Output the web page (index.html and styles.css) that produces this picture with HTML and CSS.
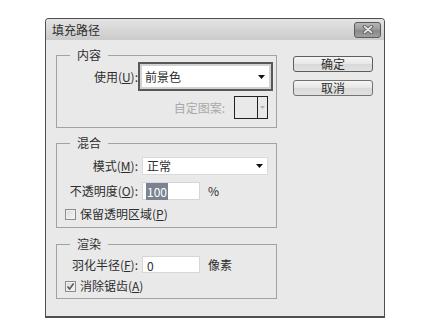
FILE: index.html
```html
<!DOCTYPE html>
<html lang="zh-CN">
<head>
  <meta charset="utf-8">
  <title>填充路径</title>
  <link rel="stylesheet" href="styles.css">
</head>
<body>

  <div class="dialog">
    <div class="titlebar">
      <span class="title">填充路径</span>
      <button class="close" type="button">
        <svg width="12" height="9" viewBox="0 0 12 9">
          <path d="M2.5 1.5 L9.5 7.5 M9.5 1.5 L2.5 7.5" stroke="#555" stroke-width="3.4" stroke-linecap="round"/>
          <path d="M2.5 1.5 L9.5 7.5 M9.5 1.5 L2.5 7.5" stroke="#e8e8e8" stroke-width="1.7" stroke-linecap="round"/>
        </svg>
      </button>
    </div>

    <div class="content">
      <div class="groups">

        <fieldset class="group group-source">
          <legend>内容</legend>
          <div class="form-grid">
            <label class="label">使用(<u>U</u>):</label>
            <div class="select select-focus">
              <span>前景色</span>
              <svg class="caret" width="7" height="4" viewBox="0 0 7 4"><path d="M0 0H7L3.5 4Z" fill="#111"/></svg>
            </div>

            <div class="pattern-row">
              <span class="muted">自定图案:</span>
              <div class="pattern-box">
                <span class="pattern-swatch"></span>
                <span class="pattern-arrow">
                  <svg width="5" height="3" viewBox="0 0 5 3"><path d="M0 0H5L2.5 3Z" fill="#b4b4b4"/></svg>
                </span>
              </div>
            </div>
          </div>
        </fieldset>

        <fieldset class="group group-blend">
          <legend>混合</legend>
          <div class="form-grid">
            <label class="label">模式(<u>M</u>):</label>
            <div class="select">
              <span>正常</span>
              <svg class="caret" width="7" height="4" viewBox="0 0 7 4"><path d="M0 0H7L3.5 4Z" fill="#111"/></svg>
            </div>

            <label class="label">不透明度(<u>O</u>):</label>
            <div class="field-with-unit">
              <div class="input"><span class="selected">100</span></div>
              <span class="unit">%</span>
            </div>

            <div class="check-row">
              <span class="checkbox"></span>
              <span>保留透明区域(<u>P</u>)</span>
            </div>
          </div>
        </fieldset>

        <fieldset class="group group-render">
          <legend>渲染</legend>
          <div class="form-grid">
            <label class="label">羽化半径(<u>F</u>):</label>
            <div class="field-with-unit">
              <div class="input input-short">0</div>
              <span class="unit">像素</span>
            </div>

            <div class="check-row">
              <span class="checkbox checked">
                <svg width="9" height="9" viewBox="0 0 9 9"><path d="M1.5 4.5 L3.6 7 L7.6 1.6" fill="none" stroke="#5a5a5a" stroke-width="1.6"/></svg>
              </span>
              <span>消除锯齿(<u>A</u>)</span>
            </div>
          </div>
        </fieldset>

      </div>

      <div class="actions">
        <button class="btn btn-default" type="button">确定</button>
        <button class="btn" type="button">取消</button>
      </div>
    </div>
  </div>

</body>
</html>
```

FILE: styles.css
```css
body {
  margin: 0;
  background: #fff;
}

.dialog {
  margin: 18px 0 0 45px;
  width: 340px;
  height: 300px;
  box-sizing: border-box;
  border: 1px solid #4f4f4f;
  border-bottom-width: 2px;
  border-radius: 4px 4px 0 0;
  background: #e9e9e9;
  color: #2e2e2e;
  font: 12px/14px "Noto Sans CJK SC", "Noto Sans", sans-serif;
}

.titlebar {
  display: flex;
  align-items: center;
  justify-content: space-between;
  height: 21px;
  padding: 0 3px 0 6px;
  border-radius: 3px 3px 0 0;
  background: linear-gradient(#e4e4e4, #cbcbcb);
}

.close {
  display: flex;
  align-items: center;
  justify-content: center;
  width: 27px;
  height: 16px;
  padding: 0;
  border: 1px solid #5a5a5a;
  border-radius: 3px;
  background: linear-gradient(#b8b8b8, #979797 50%, #898989 51%, #9e9e9e);
}

.content {
  display: flex;
  padding: 8px 0 0 10px;
}

.groups {
  width: 221px;
}

.group {
  margin: 0;
  padding: 0;
  min-width: 0;
  border: 1px solid #a2a2a2;
}

.group legend {
  margin-left: 13px;
  padding: 0 7px;
  line-height: 14px;
}

.group-blend {
  margin-top: 8px;
}

.group-render {
  margin-top: 9px;
}

.form-grid {
  display: grid;
  grid-template-columns: 81px auto;
  column-gap: 4px;
  align-items: center;
}

.group-source .form-grid {
  row-gap: 5px;
  padding-bottom: 8px;
}

.group-blend .form-grid {
  row-gap: 7px;
  padding: 7px 0 6px;
}

.group-render .form-grid {
  row-gap: 6px;
  padding: 5px 0 5px;
}

.label {
  text-align: right;
  white-space: nowrap;
}

.select {
  display: flex;
  align-items: center;
  justify-content: space-between;
  box-sizing: border-box;
  width: 126px;
  height: 18px;
  padding: 0 4px;
  border: 1px solid #dadada;
  background: #fff;
}

.select-focus {
  width: 135px;
  height: 29px;
  margin-left: -4px;
  padding: 0 6px 0 5px;
  border: 2px solid #585858;
  box-shadow: inset 0 0 0 2px #d2d2d2;
}

.pattern-row {
  grid-column: 2;
  display: flex;
  align-items: center;
  justify-content: flex-end;
  gap: 9px;
  width: 126px;
}

.muted {
  color: #a9a9a9;
}

.pattern-box {
  display: flex;
  box-sizing: border-box;
  width: 34px;
  height: 23px;
  border: 1px solid #222;
}

.pattern-swatch {
  width: 22px;
  border-right: 1px solid #222;
}

.pattern-arrow {
  display: flex;
  flex: 1;
  align-items: center;
  justify-content: center;
}

.field-with-unit {
  display: flex;
  align-items: center;
  gap: 9px;
}

.input {
  box-sizing: border-box;
  width: 58px;
  height: 18px;
  padding: 1px 3px 0;
  border: 1px solid #d6d6d6;
  background: #fff;
  line-height: 15px;
}

.input-short {
  height: 17px;
  padding-left: 4px;
}

.selected {
  padding: 0 1px;
  background: #7b8392;
  color: #fff;
}

.unit {
  margin-left: -1px;
}

.check-row {
  grid-column: 1 / -1;
  display: flex;
  align-items: center;
  gap: 4px;
  padding-left: 8px;
  height: 14px;
}

.checkbox {
  display: flex;
  align-items: center;
  justify-content: center;
  box-sizing: border-box;
  width: 11px;
  height: 11px;
  border: 1px solid #8c8c8c;
  background: linear-gradient(135deg, #d8d8d8, #f7f7f7);
  box-shadow: inset 0 0 0 1px #f0f0f0;
}

.actions {
  display: flex;
  flex-direction: column;
  gap: 8px;
  margin-left: 16px;
  padding-top: 8px;
}

.btn {
  width: 80px;
  height: 16px;
  padding: 0;
  border: 1px solid #727272;
  border-radius: 3px;
  background: linear-gradient(#f5f5f5, #e6e6e6 50%, #d9d9d9 51%, #e1e1e1);
  color: #2e2e2e;
  font: 12px/14px "Noto Sans CJK SC", "Noto Sans", sans-serif;
}

.btn-default {
  border-color: #5e5e5e;
}
```
